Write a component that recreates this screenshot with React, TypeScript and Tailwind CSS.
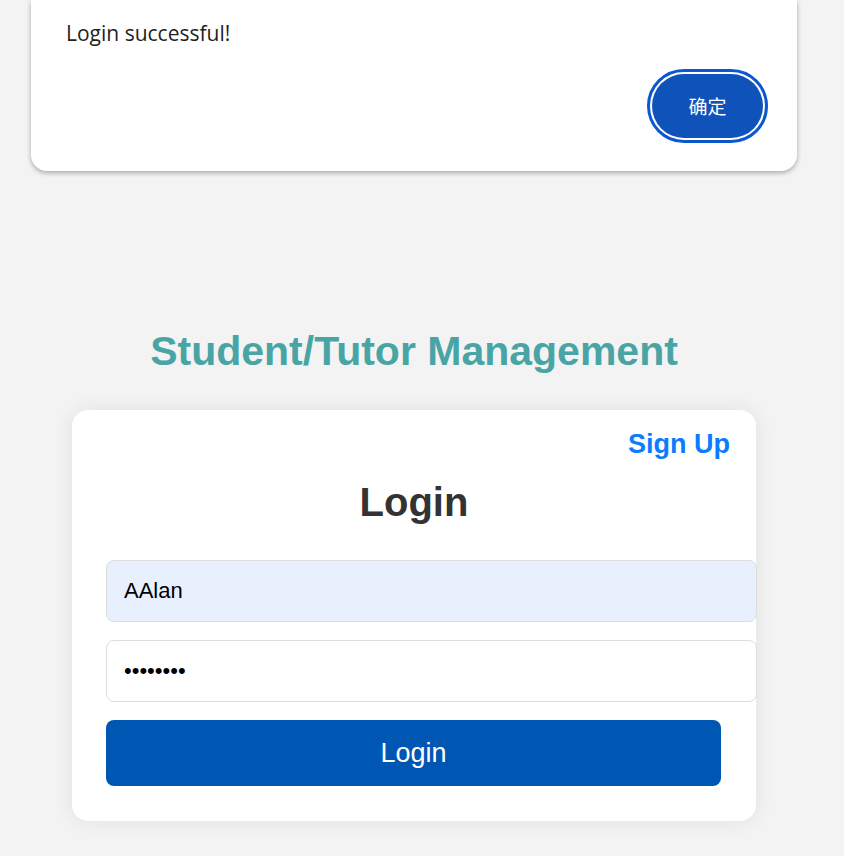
export default function App() {
  return (
    <div className="min-h-[856px] bg-[#f3f3f3] overflow-hidden">
      <div className="w-[828px]">
        {/* alert dialog, top cut off by the window */}
        <div className="mx-auto w-[766px] h-[171px] bg-white rounded-b-2xl shadow-[0_2px_5px_rgba(0,0,0,0.3)] font-['Open_Sans','Noto_Sans_CJK_SC',sans-serif] relative">
          <p className="absolute left-[35px] top-[19px] text-[21px] text-[#1f1f1f] leading-[28px]">
            Login successful!
          </p>
          <button className="absolute left-[621px] top-[74px] w-[111px] h-[64px] rounded-full bg-[#0f52ba] text-white text-[19px] outline-[3px] outline-solid outline-[#0b57d0] outline-offset-2 font-['Noto_Sans_CJK_SC',sans-serif]">
            确定
          </button>
        </div>

        <div className="font-['Liberation_Sans',Arial,sans-serif]">
          <h1 className="mt-[157px] text-center text-[41px] leading-[47px] font-bold text-[#49a5a5]">
            Student/Tutor Management
          </h1>

          <div className="mt-[35px] ml-[72px] w-[684px] bg-white rounded-2xl shadow-[0_0_20px_rgba(0,0,0,0.08)] pt-[19px] pb-[35px] pl-[34px] pr-[26px]">
            <div className="flex justify-end">
              <a className="text-[27px] leading-[31px] font-bold text-[#0a7cff]" href="#">
                Sign Up
              </a>
            </div>
            <h2 className="mt-[19px] text-center pr-[8px] text-[40px] leading-[46px] font-bold text-[#333333]">
              Login
            </h2>
            <div className="mt-[35px] flex flex-col gap-[18px]">
              <input
                readOnly
                value="AAlan"
                className="w-[651px] h-[62px] rounded-lg border border-[#dddddd] bg-[#e8f0fe] pl-[17px] text-[22px] text-black outline-none"
              />
              <input
                readOnly
                type="password"
                value="12345678"
                className="w-[651px] h-[62px] rounded-lg border border-[#dddddd] bg-white pl-[17px] text-[22px] text-black outline-none"
              />
              <button className="w-[615px] h-[66px] rounded-lg bg-[#0056b3] text-white text-[27px]">
                Login
              </button>
            </div>
          </div>
        </div>
      </div>
    </div>
  );
}
